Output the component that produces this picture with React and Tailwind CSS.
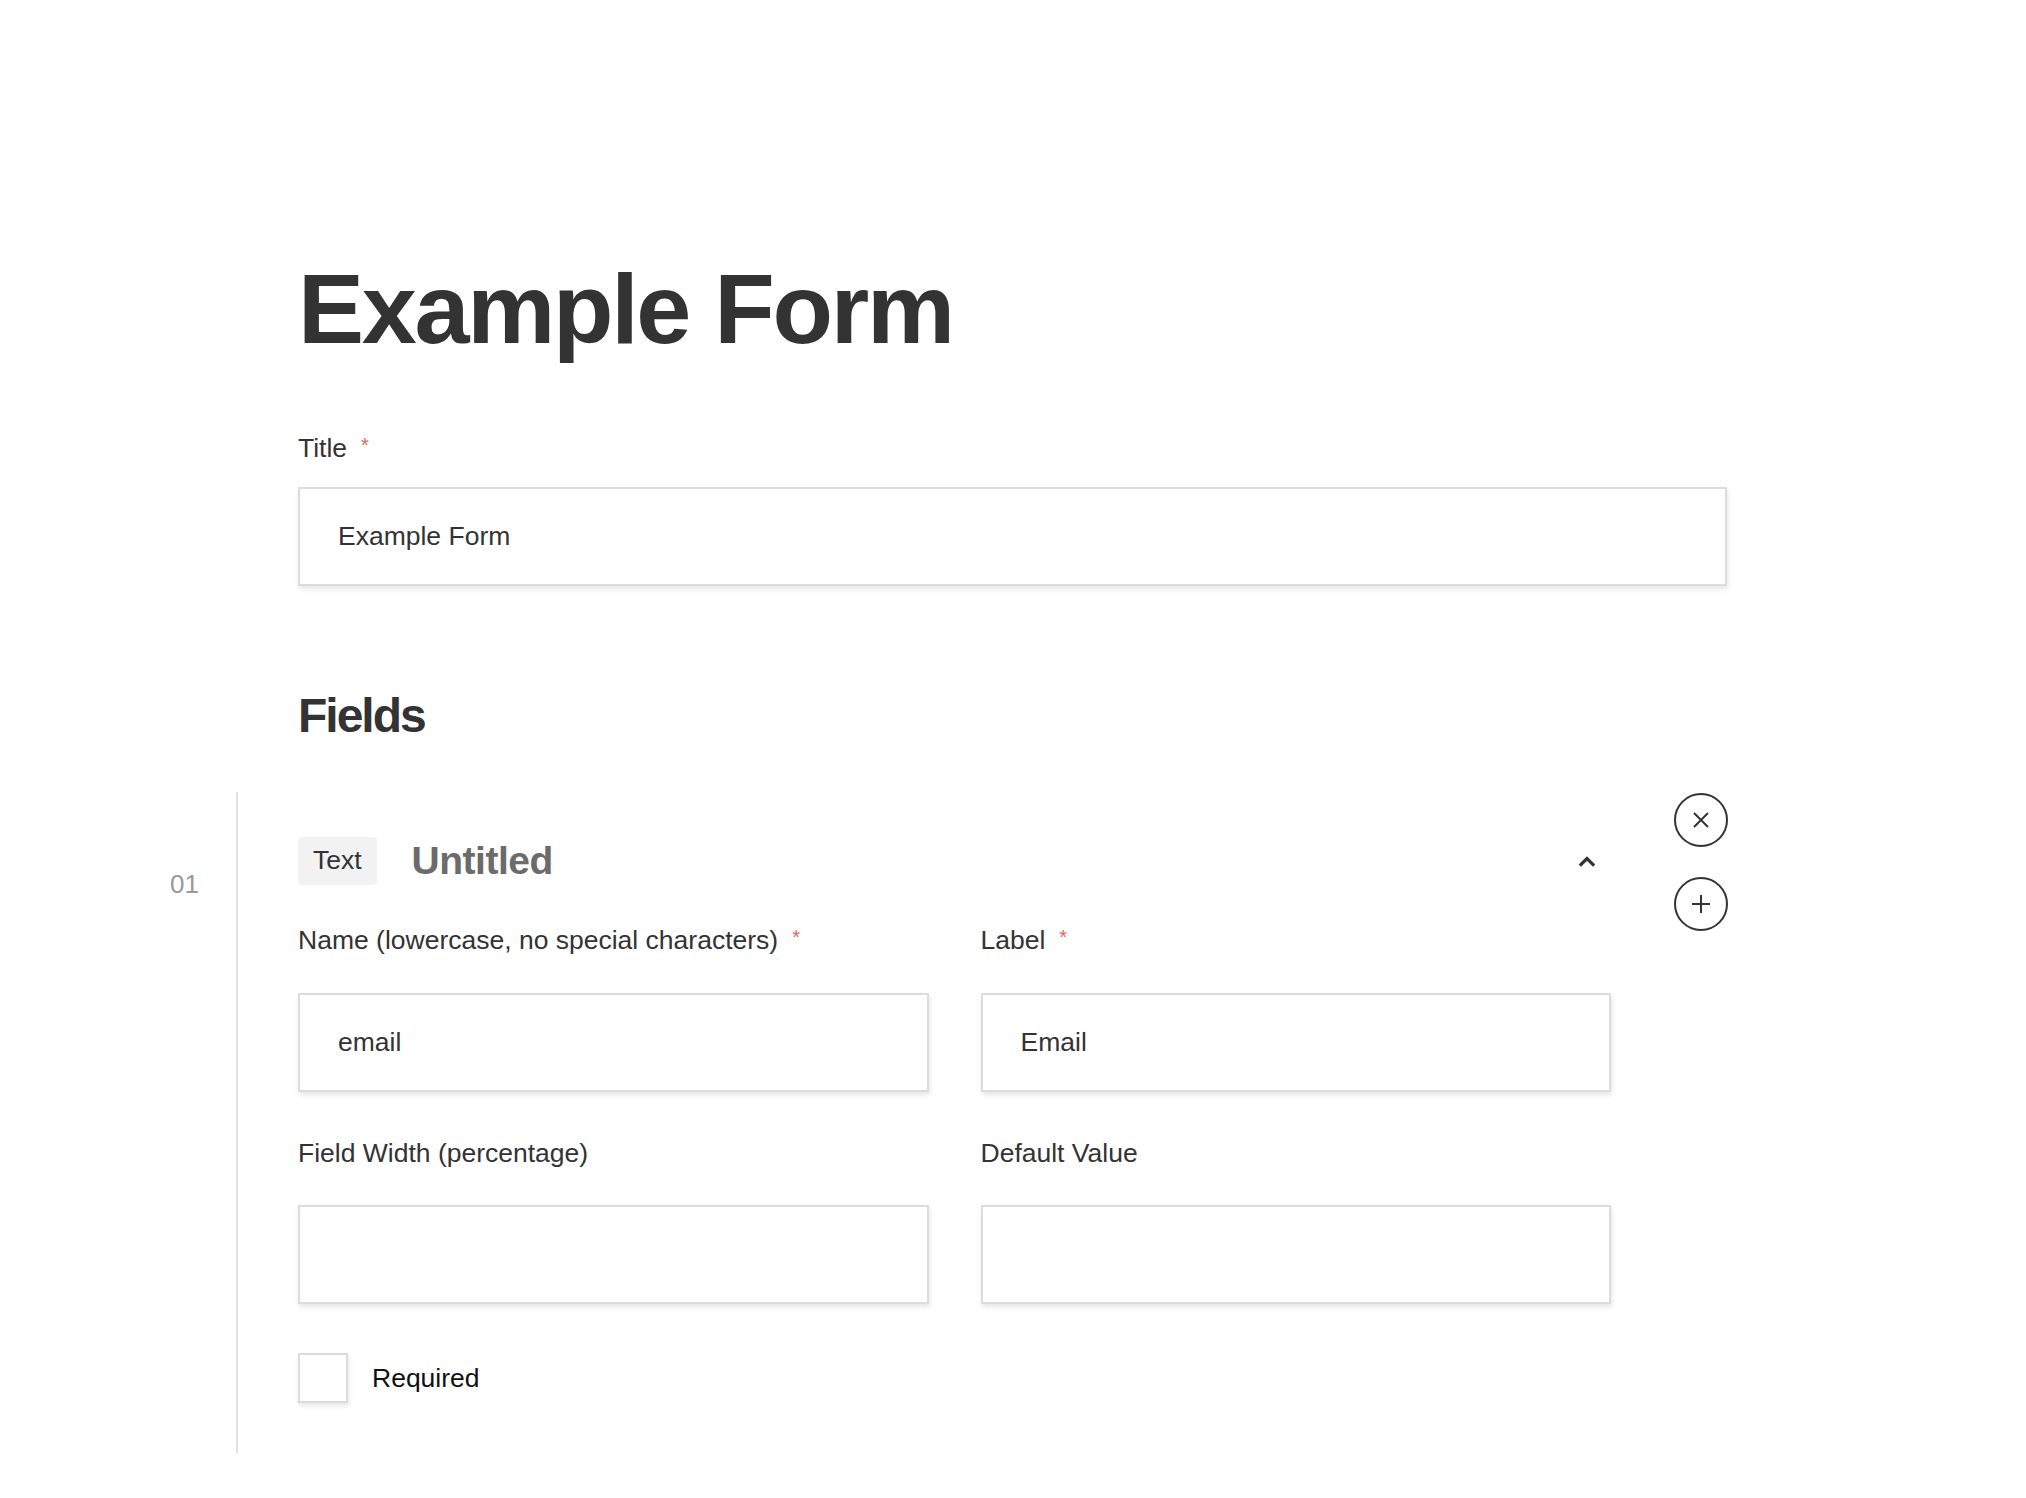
import React from "react";

function Label({ text, required }) {
  return (
    <div className="flex items-start text-[26.5px] leading-[32px] text-[#333]">
      <span>{text}</span>
      {required && (
        <span className="ml-[14px] mt-[3px] text-[20px] leading-[20px] text-[#e06666]">*</span>
      )}
    </div>
  );
}

function TextInput({ value }) {
  return (
    <input
      readOnly
      defaultValue={value}
      className="block w-full h-[99px] border-2 border-[#dcdcdc] bg-white pl-[38px] text-[26.5px] text-[#333] outline-none shadow-[1px_3px_5px_rgba(0,0,0,0.10)] font-['Liberation_Sans',Arial,sans-serif]"
    />
  );
}

export default function App() {
  return (
    <div className="min-h-screen bg-white font-['Liberation_Sans',Arial,sans-serif] text-[#333]">
      <div className="pt-[259px] pl-[298px] pb-[45px]">
        <h1 className="text-[99px] leading-none font-bold tracking-[-2.3px] text-[#333]">
          Example Form
        </h1>

        <div className="mt-[74px] w-[1429px]">
          <Label text="Title" required />
          <div className="mt-[23px]">
            <TextInput value="Example Form" />
          </div>
        </div>

        <h2 className="mt-[106px] text-[48px] leading-none font-bold tracking-[-2px] text-[#333]">
          Fields
        </h2>

        <div className="mt-[52px] -ml-[128px] flex items-start">
          <div className="w-[66px] pt-[76px] text-[26px] leading-[32px] text-[#999]">01</div>

          <div className="w-[1375px] border-l-2 border-[#e2e2e2] pl-[60px] pt-[45px] pb-[50px]">
            <div className="flex items-center justify-between h-[48px]">
              <div className="flex items-center">
                <div className="h-[48px] px-[15px] flex items-center rounded-[4px] bg-[#f2f2f2] text-[26.5px] text-[#333]">
                  Text
                </div>
                <div className="ml-[35px] text-[39px] font-bold text-[#6b6b6b] tracking-[-0.5px]">
                  Untitled
                </div>
              </div>
              <button className="w-[48px] h-[48px] flex items-center justify-center">
                <svg width="18" height="12" viewBox="0 0 18 12" fill="none">
                  <polyline
                    points="3,9.5 9,3.5 15,9.5"
                    stroke="#333"
                    strokeWidth="3.2"
                    strokeLinecap="square"
                    strokeLinejoin="miter"
                  />
                </svg>
              </button>
            </div>

            <div className="mt-[39px] grid grid-cols-2 gap-x-[52px] gap-y-[45px]">
              <div className="flex flex-col">
                <Label text="Name (lowercase, no special characters)" required />
                <div className="mt-[37px]">
                  <TextInput value="email" />
                </div>
              </div>
              <div className="flex flex-col">
                <Label text="Label" required />
                <div className="mt-[37px]">
                  <TextInput value="Email" />
                </div>
              </div>
              <div className="flex flex-col">
                <Label text="Field Width (percentage)" />
                <div className="mt-[36px]">
                  <TextInput value="" />
                </div>
              </div>
              <div className="flex flex-col">
                <Label text="Default Value" />
                <div className="mt-[36px]">
                  <TextInput value="" />
                </div>
              </div>
            </div>

            <div className="mt-[49px] flex items-center gap-[24px]">
              <div className="w-[50px] h-[50px] border-2 border-[#dcdcdc] bg-white shadow-[1px_3px_5px_rgba(0,0,0,0.10)]" />
              <span className="text-[26.5px] leading-[32px] text-[#111]">Required</span>
            </div>
          </div>

          <div className="ml-[63px] pt-[1px] flex flex-col gap-[30px]">
            <button className="w-[54px] h-[54px] rounded-full border-2 border-[#333] flex items-center justify-center">
              <svg width="18" height="18" viewBox="0 0 18 18" fill="none">
                <path d="M2 2 L16 16 M16 2 L2 16" stroke="#333" strokeWidth="2" />
              </svg>
            </button>
            <button className="w-[54px] h-[54px] rounded-full border-2 border-[#333] flex items-center justify-center">
              <svg width="20" height="20" viewBox="0 0 20 20" fill="none">
                <path d="M10 1 L10 19 M1 10 L19 10" stroke="#333" strokeWidth="2" />
              </svg>
            </button>
          </div>
        </div>
      </div>
    </div>
  );
}
